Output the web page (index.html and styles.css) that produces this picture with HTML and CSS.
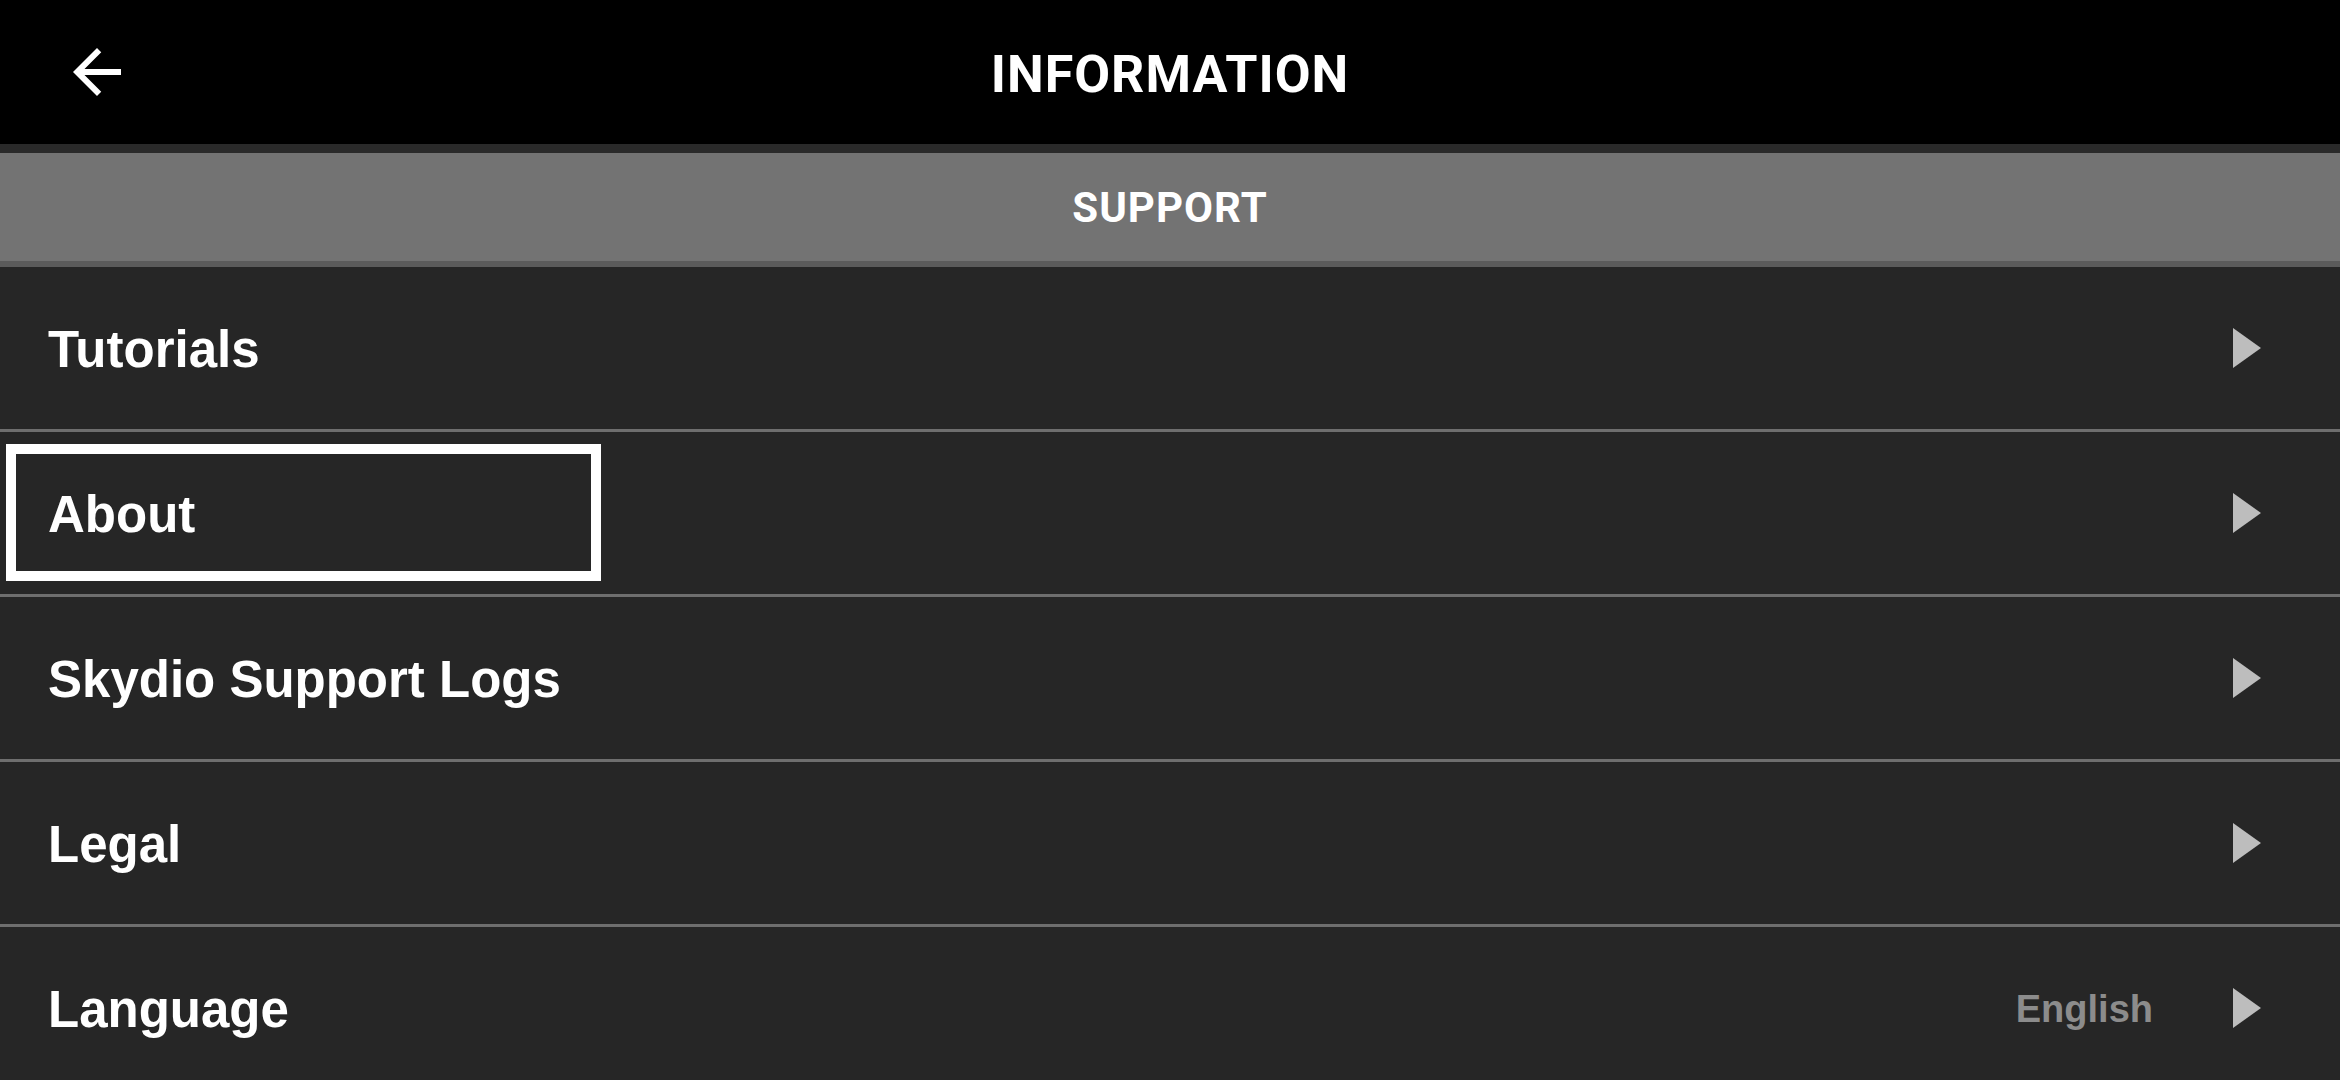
FILE: index.html
```html
<!DOCTYPE html>
<html lang="en">
<head>
<meta charset="utf-8">
<title>Information</title>
<link rel="stylesheet" href="styles.css">
</head>
<body>
<div class="app">
  <header class="topbar">
    <button class="back" aria-label="Back">
      <svg class="back-icon" viewBox="0 0 24 24" width="72" height="72"><path d="M20 11H7.83l5.59-5.59L12 4l-8 8 8 8 1.41-1.41L7.83 13H20v-2z" fill="#fff"/></svg>
    </button>
    <h1 class="title">INFORMATION</h1>
  </header>
  <div class="section">SUPPORT</div>
  <ul class="list">
    <li class="row"><span class="label">Tutorials</span><span class="chev"></span></li>
    <li class="row focused"><span class="label">About</span><span class="chev"></span></li>
    <li class="row"><span class="label">Skydio Support Logs</span><span class="chev"></span></li>
    <li class="row"><span class="label">Legal</span><span class="chev"></span></li>
    <li class="row"><span class="label">Language</span><span class="value">English</span><span class="chev"></span></li>
  </ul>
</div>
</body>
</html>
```

FILE: styles.css
```css
html, body {
  margin: 0;
  padding: 0;
  background: #262626;
  height: 100%;
  overflow: hidden;
}

.app {
  width: 2340px;
  height: 1080px;
  display: flex;
  flex-direction: column;
  font-family: "Liberation Sans", Arial, sans-serif;
  color: #fff;
}

.topbar {
  box-sizing: border-box;
  height: 153px;
  padding-top: 5px;
  background: #000;
  border-bottom: 9px solid #2a2a2a;
  display: flex;
  align-items: center;
  justify-content: center;
  position: relative;
  flex: none;
}

.back {
  position: absolute;
  left: 61px;
  top: 36px;
  width: 72px;
  height: 72px;
  padding: 0;
  border: 0;
  background: none;
  display: block;
}

.back-icon {
  display: block;
}

.title {
  margin: 0;
  font-family: Roboto, "Liberation Sans", sans-serif;
  font-weight: 700;
  font-size: 52px;
  letter-spacing: 1px;
  line-height: 1;
  color: #fff;
}

.section {
  height: 108px;
  flex: none;
  background: #737373;
  border-bottom: 6px solid #5b5b5b;
  display: flex;
  align-items: center;
  justify-content: center;
  font-family: Roboto, "Liberation Sans", sans-serif;
  font-weight: 700;
  font-size: 42px;
  letter-spacing: 1px;
  color: #fff;
}

.list {
  list-style: none;
  margin: 0;
  padding: 0;
}

.row {
  position: relative;
  box-sizing: border-box;
  height: 165px;
  border-bottom: 3px solid #6e6e6e;
  display: flex;
  align-items: center;
  padding: 3px 79px 0 48px;
}

.label {
  flex: 1;
  font-size: 51px;
  font-weight: 700;
  color: #fff;
}

.value {
  font-size: 38px;
  font-weight: 700;
  color: #8c8c8c;
  margin-right: 80px;
}

.chev {
  width: 0;
  height: 0;
  margin-top: -3px;
  border-top: 20px solid transparent;
  border-bottom: 20px solid transparent;
  border-left: 28px solid #bdbdbd;
  flex: none;
}

.focused::after {
  content: "";
  position: absolute;
  left: 6px;
  top: 12px;
  width: 575px;
  height: 117px;
  border: 10px solid #fff;
  pointer-events: none;
}
```
